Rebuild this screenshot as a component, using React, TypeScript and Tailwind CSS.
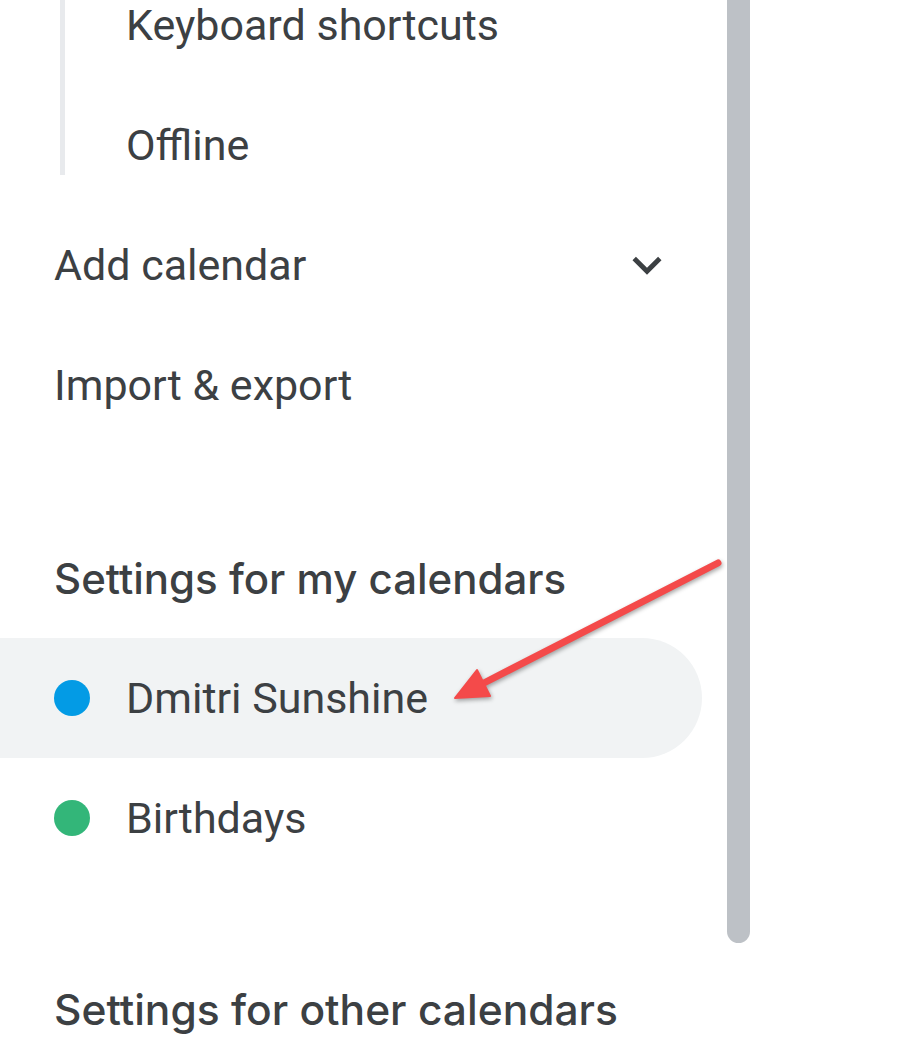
import React from "react";

const body = { fontFamily: "Roboto, 'Liberation Sans', sans-serif" };
const head = { fontFamily: "Inter, 'Noto Sans', sans-serif" };

function Dot({ color }: { color: string }) {
  return <span className={`block w-[36px] h-[36px] rounded-full shrink-0 ${color}`} />;
}

export default function App() {
  return (
    <div className="relative w-[909px] h-[1058px] overflow-hidden bg-white text-[#3c4043]">
      <div className="flex items-start">
        {/* content column */}
        <div className="w-[702px] shrink-0" style={body}>
          {/* sub list */}
          <div className="-mt-[35px] ml-[60px] h-[210px] border-l-[5px] border-[#e8eaed]">
            <div className="h-[120px] flex items-center pl-[61px] text-[43px]">Keyboard shortcuts</div>
            <div className="h-[120px] flex items-center pl-[61px] text-[43px]">Offline</div>
          </div>
          <div className="mt-[30px] h-[120px] flex items-center justify-between pl-[54px] pr-[26px] text-[43px]">
            <span>Add calendar</span>
            <svg viewBox="0 0 24 24" className="w-[58px] h-[58px]" fill="#3c4043">
              <path d="M16.59 8.59L12 13.17 7.41 8.59 6 10l6 6 6-6z" />
            </svg>
          </div>
          <div className="h-[120px] flex items-center pl-[54px] text-[43px]">Import &amp; export</div>

          <div className="mt-[73px] h-[120px] flex items-center pl-[54px] text-[42px] font-medium" style={head}>
            Settings for my calendars
          </div>
          <div className="h-[120px] flex items-center gap-[36px] pl-[54px] bg-[#f1f3f4] rounded-r-full text-[43px]">
            <Dot color="bg-[#039be5]" />
            <span>Dmitri Sunshine</span>
          </div>
          <div className="h-[120px] flex items-center gap-[36px] pl-[54px] text-[43px]">
            <Dot color="bg-[#33b679]" />
            <span>Birthdays</span>
          </div>
          <div className="mt-[72px] h-[120px] flex items-center pl-[54px] text-[42.5px] font-medium" style={head}>
            Settings for other calendars
          </div>
        </div>
        {/* scrollbar */}
        <div className="ml-[25px] w-[23px] h-[943px] bg-[#bdc1c6] rounded-b-[12px]" />
      </div>

      {/* annotation arrow */}
      <svg
        className="absolute left-0 top-0 pointer-events-none drop-shadow-[1px_2px_2px_rgba(0,0,0,0.35)]"
        width="909"
        height="1058"
        viewBox="0 0 909 1058"
      >
        <line x1="718" y1="563" x2="480" y2="685" stroke="#f44a4a" strokeWidth="7" strokeLinecap="round" />
        <polygon points="455,698 477,670 490,696" fill="#f44a4a" stroke="#f44a4a" strokeWidth="2" strokeLinejoin="round" />
      </svg>
    </div>
  );
}
